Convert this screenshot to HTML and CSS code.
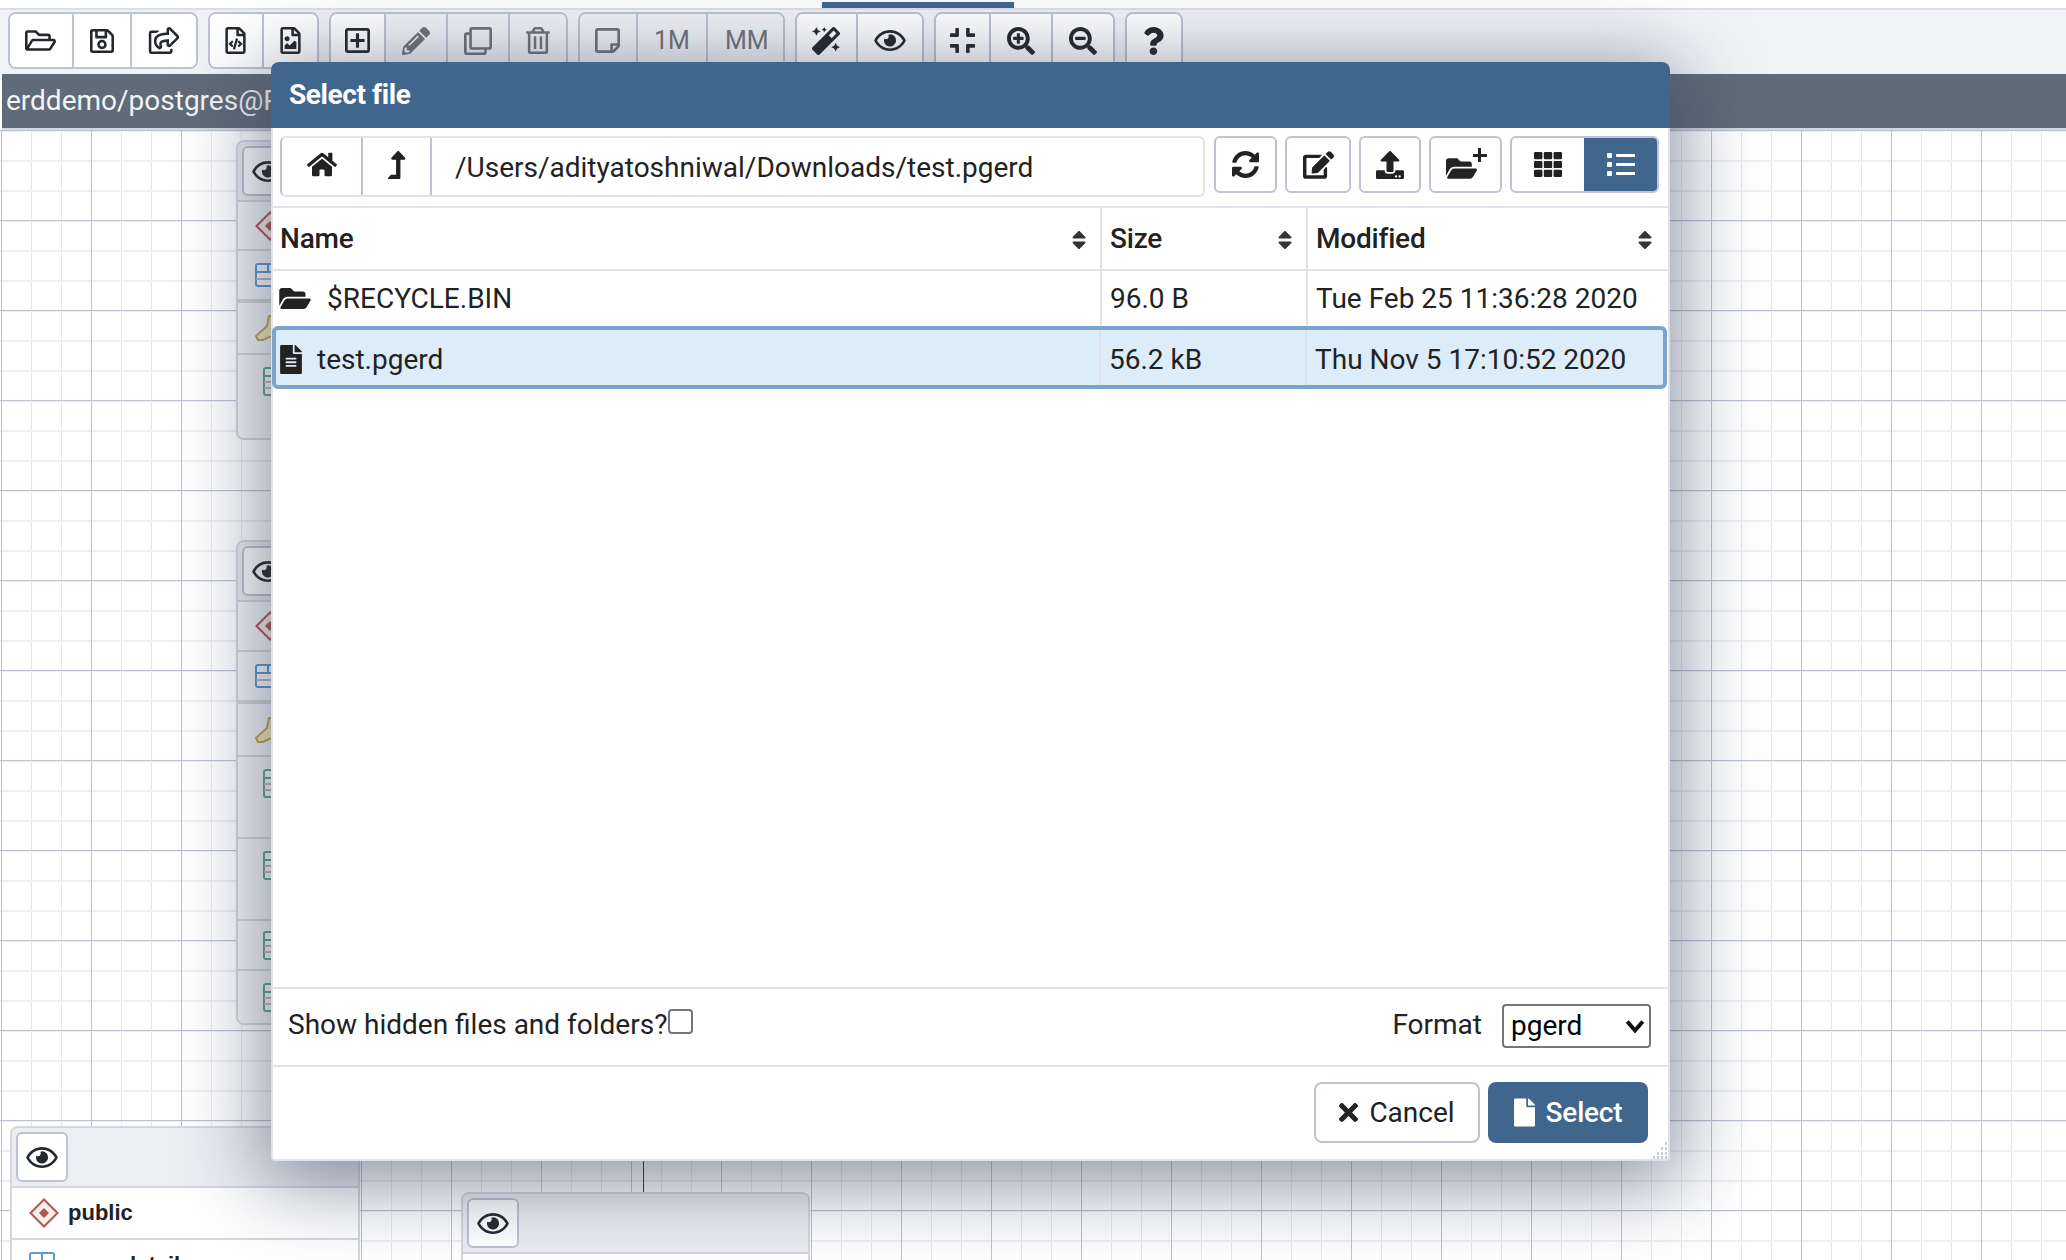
FILE: index.html
```html
<!DOCTYPE html>
<html lang="en">
<head>
<meta charset="utf-8">
<title>Select file</title>
<link rel="stylesheet" href="styles.css">
</head>
<body>
<svg class="defs" aria-hidden="true">
<defs>
<symbol id="i-eye" viewBox="0 64 576 384"><path d="M288 144a110.94 110.94 0 0 0-31.24 5 55.4 55.4 0 0 1 7.24 27 56 56 0 0 1-56 56 55.4 55.4 0 0 1-27-7.24A111.71 111.71 0 1 0 288 144zm284.52 97.4C518.29 135.59 410.93 64 288 64S57.68 135.64 3.48 241.41a32.35 32.35 0 0 0 0 29.19C57.71 376.41 165.07 448 288 448s230.32-71.64 284.52-177.41a32.35 32.35 0 0 0 0-29.19zM288 400c-98.65 0-189.09-55-237.93-144C98.91 167 189.34 112 288 112s189.09 55 237.93 144C477.1 345 386.66 400 288 400z"/></symbol>
<symbol id="i-open" viewBox="0 64 576 384"><path d="M527.9 224H480v-48c0-26.5-21.5-48-48-48H272l-64-64H48C21.5 64 0 85.5 0 112v288c0 26.5 21.5 48 48 48h400c16.5 0 31.9-8.5 40.7-22.6l79.9-128c20-31.9-3-73.4-40.7-73.4zM48 118c0-3.3 2.7-6 6-6h134.1l64 64H426c3.3 0 6 2.7 6 6v42H152c-16.8 0-32.4 8.8-41.1 23.2L48 351.4zm400 282H72l77.2-128H528z"/></symbol>
<symbol id="i-save" viewBox="0 32 448 448"><path d="M433.941 129.941l-83.882-83.882A48 48 0 0 0 316.118 32H48C21.49 32 0 53.49 0 80v352c0 26.51 21.49 48 48 48h352c26.51 0 48-21.49 48-48V163.882a48 48 0 0 0-14.059-33.941zM272 80v80H144V80h128zm122 352H54a6 6 0 0 1-6-6V86a6 6 0 0 1 6-6h42v104c0 13.255 10.745 24 24 24h176c13.255 0 24-10.745 24-24V83.882l78.243 78.243a6 6 0 0 1 1.757 4.243V426a6 6 0 0 1-6 6zM224 232c-48.523 0-88 39.477-88 88s39.477 88 88 88 88-39.477 88-88-39.477-88-88-88zm0 128c-22.056 0-40-17.944-40-40s17.944-40 40-40 40 17.944 40 40-17.944 40-40 40z"/></symbol>
<symbol id="i-share" viewBox="0 0 576 512"><path d="M561.938 158.06L417.94 14.092C387.926-15.922 336 5.097 336 48.032v57.198c-42.45 1.88-84.03 6.55-120.76 17.99-35.17 10.95-63.07 27.58-82.91 49.42C108.22 199.2 96 232.6 96 271.94c0 61.697 33.178 112.455 84.87 144.76 37.546 23.508 85.248-12.651 71.02-55.74-15.515-47.119-17.156-70.923 84.11-78.76V336c0 42.993 51.968 63.913 81.94 33.94l143.998-144c18.75-18.74 18.75-49.14 0-67.88zM384 336V232.16C255.309 234.082 166.492 255.35 206.31 376 176.79 357.55 144 324.08 144 271.94c0-109.334 129.14-118.947 240-119.85V48l144 144-144 144zm24.74 84.493a82.658 82.658 0 0 0 20.974-9.303c7.976-4.952 18.286.826 18.286 10.214V464c0 26.51-21.49 48-48 48H48c-26.51 0-48-21.49-48-48V112c0-26.51 21.49-48 48-48h132c6.627 0 12 5.373 12 12v4.486c0 4.917-2.987 9.369-7.569 11.152-13.702 5.331-26.396 11.537-38.05 18.585a12.138 12.138 0 0 1-6.28 1.777H54a6 6 0 0 0-6 6v340a6 6 0 0 0 6 6h340a6 6 0 0 0 6-6v-25.966c0-5.37 3.579-10.059 8.74-11.541z"/></symbol>
<symbol id="i-code" viewBox="0 0 384 512"><path d="M149.9 349.1l-.2-.2-32.8-28.9 32.8-28.9c3.6-3.2 4-8.8.8-12.4l-.2-.2-17.4-18.6c-3.4-3.6-9-3.7-12.4-.4l-57.7 54.1c-3.7 3.5-3.7 9.4 0 12.8l57.7 54.1c1.6 1.5 3.8 2.4 6 2.4 2.4 0 4.8-1 6.4-2.8l17.4-18.6c3.3-3.5 3.1-9.1-.4-12.4zm220-251.2L286 14C277 5 264.8-.1 252.1-.1H48C21.5 0 0 21.5 0 48v416c0 26.5 21.5 48 48 48h288c26.5 0 48-21.5 48-48V131.9c0-12.7-5.1-25-14.1-34zM256 51.9l76.1 76.1H256zM336 464H48V48h160v104c0 13.3 10.7 24 24 24h104zM209.6 214c-4.7-1.4-9.5 1.3-10.9 6L144 408.1c-1.4 4.7 1.3 9.6 6 10.9l24.4 7.1c4.7 1.4 9.6-1.4 10.9-6L240 231.9c1.4-4.7-1.3-9.6-6-10.9zm24.5 76.9l.2.2 32.8 28.9-32.8 28.9c-3.6 3.2-4 8.8-.8 12.4l.2.2 17.4 18.6c3.3 3.5 8.9 3.7 12.4.4l57.7-54.1c3.7-3.5 3.7-9.4 0-12.8l-57.7-54.1c-3.5-3.3-9.1-3.2-12.4.4l-17.4 18.6c-3.3 3.5-3.1 9.1.4 12.4z"/></symbol>
<symbol id="i-image" viewBox="0 0 384 512"><path d="M369.9 97.9L286 14C277 5 264.8-.1 252.1-.1H48C21.5 0 0 21.5 0 48v416c0 26.5 21.5 48 48 48h288c26.5 0 48-21.5 48-48V131.9c0-12.7-5.1-25-14.1-34zM332.1 128H256V51.9l76.1 76.1zM48 464V48h160v104c0 13.3 10.7 24 24 24h104v288H48zm32-48h224V288l-23.5-23.5c-4.7-4.7-12.3-4.7-17 0L176 352l-39.5-39.5c-4.7-4.7-12.3-4.7-17 0L80 352v64zm48-240c-26.5 0-48 21.5-48 48s21.5 48 48 48 48-21.5 48-48-21.5-48-48-48z"/></symbol>
<symbol id="i-plus" viewBox="0 32 448 448"><path d="M352 240v32c0 6.6-5.4 12-12 12h-88v88c0 6.6-5.4 12-12 12h-32c-6.6 0-12-5.4-12-12v-88h-88c-6.6 0-12-5.4-12-12v-32c0-6.6 5.4-12 12-12h88v-88c0-6.6 5.4-12 12-12h32c6.6 0 12 5.4 12 12v88h88c6.6 0 12 5.4 12 12zm96-160v352c0 26.5-21.5 48-48 48H48c-26.5 0-48-21.5-48-48V80c0-26.5 21.5-48 48-48h352c26.5 0 48 21.5 48 48zm-48 346V86c0-3.3-2.7-6-6-6H54c-3.3 0-6 2.7-6 6v340c0 3.3 2.7 6 6 6h340c3.3 0 6-2.7 6-6z"/></symbol>
<symbol id="i-pencil" viewBox="0 0 512 512"><path d="M497.9 142.1l-46.1 46.1c-4.7 4.7-12.3 4.7-17 0l-111-111c-4.7-4.7-4.7-12.3 0-17l46.1-46.1c18.7-18.7 49.1-18.7 67.9 0l60.1 60.1c18.8 18.7 18.8 49.1 0 67.9zM284.2 99.8L21.6 362.4.4 483.9c-2.9 16.4 11.4 30.6 27.8 27.8l121.5-21.3 262.6-262.6c4.7-4.7 4.7-12.3 0-17l-111-111c-4.8-4.7-12.4-4.7-17.1 0zM124.1 339.9c-5.5-5.5-5.5-14.3 0-19.8l154-154c5.5-5.5 14.3-5.5 19.8 0s5.5 14.3 0 19.8l-154 154c-5.5 5.5-14.3 5.5-19.8 0zM88 424h48v36.3l-64.5 11.3-31.1-31.1L51.7 376H88v48z"/></symbol>
<symbol id="i-clone" viewBox="0 0 512 512"><path d="M464 0H144c-26.51 0-48 21.49-48 48v48H48c-26.51 0-48 21.49-48 48v320c0 26.51 21.49 48 48 48h320c26.51 0 48-21.49 48-48v-48h48c26.51 0 48-21.49 48-48V48c0-26.51-21.49-48-48-48zM362 464H54a6 6 0 0 1-6-6V150a6 6 0 0 1 6-6h42v224c0 26.51 21.49 48 48 48h224v42a6 6 0 0 1-6 6zm96-96H150a6 6 0 0 1-6-6V54a6 6 0 0 1 6-6h308a6 6 0 0 1 6 6v308a6 6 0 0 1-6 6z"/></symbol>
<symbol id="i-trash" viewBox="0 0 448 512"><path d="M268 416h24a12 12 0 0 0 12-12V188a12 12 0 0 0-12-12h-24a12 12 0 0 0-12 12v216a12 12 0 0 0 12 12zM432 80h-82.41l-34-56.7A48 48 0 0 0 274.41 0H173.59a48 48 0 0 0-41.16 23.3L98.41 80H16A16 16 0 0 0 0 96v16a16 16 0 0 0 16 16h16v336a48 48 0 0 0 48 48h288a48 48 0 0 0 48-48V128h16a16 16 0 0 0 16-16V96a16 16 0 0 0-16-16zM171.84 50.91A6 6 0 0 1 177 48h94a6 6 0 0 1 5.15 2.91L293.61 80H154.39zM368 464H80V128h288zm-212-48h24a12 12 0 0 0 12-12V188a12 12 0 0 0-12-12h-24a12 12 0 0 0-12 12v216a12 12 0 0 0 12 12z"/></symbol>
<symbol id="i-note" viewBox="0 32 448 448"><path d="M448 348.106V80c0-26.51-21.49-48-48-48H48C21.49 32 0 53.49 0 80v351.988c0 26.51 21.49 48 48 48h268.118a48 48 0 0 0 33.941-14.059l83.882-83.882A48 48 0 0 0 448 348.106zm-128 80v-76.118h76.118L320 428.106zM400 80v223.988H296c-13.255 0-24 10.745-24 24v104H48V80h352z"/></symbol>
<symbol id="i-magic" viewBox="0 0 512 512"><path d="M224 96l16-32 32-16-32-16-16-32-16 32-32 16 32 16 16 32zM80 160l26.66-53.33L160 80l-53.34-26.67L80 0 53.34 53.33 0 80l53.34 26.67L80 160zm352 128l-26.66 53.33L352 368l53.34 26.67L432 448l26.66-53.33L512 368l-53.34-26.67L432 288zm70.62-193.77L417.77 9.38C411.53 3.12 403.34 0 395.15 0c-8.19 0-16.38 3.12-22.63 9.38L9.38 372.52c-12.5 12.5-12.5 32.76 0 45.25l84.85 84.85c6.25 6.25 14.44 9.37 22.62 9.37 8.19 0 16.38-3.12 22.63-9.37l363.14-363.15c12.5-12.48 12.5-32.75 0-45.24zM359.45 203.46l-50.91-50.91 86.6-86.6 50.91 50.91-86.6 86.6z"/></symbol>
<symbol id="i-compress" viewBox="0 32 448 448"><path d="M436 192H312c-13.3 0-24-10.7-24-24V44c0-6.6 5.4-12 12-12h40c6.6 0 12 5.4 12 12v84h84c6.6 0 12 5.4 12 12v40c0 6.6-5.4 12-12 12zm-276-24V44c0-6.6-5.4-12-12-12h-40c-6.6 0-12 5.4-12 12v84H12c-6.6 0-12 5.4-12 12v40c0 6.6 5.4 12 12 12h124c13.3 0 24-10.7 24-24zm0 300V344c0-13.3-10.7-24-24-24H12c-6.6 0-12 5.4-12 12v40c0 6.6 5.4 12 12 12h84v84c0 6.6 5.4 12 12 12h40c6.6 0 12-5.4 12-12zm192 0v-84h84c6.6 0 12-5.4 12-12v-40c0-6.6-5.4-12-12-12H312c-13.3 0-24 10.7-24 24v124c0 6.6 5.4 12 12 12h40c6.6 0 12-5.4 12-12z"/></symbol>
<symbol id="i-zoomin" viewBox="0 0 512 512"><path d="M304 192v32c0 6.6-5.4 12-12 12h-56v56c0 6.6-5.4 12-12 12h-32c-6.6 0-12-5.4-12-12v-56h-56c-6.6 0-12-5.4-12-12v-32c0-6.6 5.4-12 12-12h56v-56c0-6.6 5.4-12 12-12h32c6.6 0 12 5.4 12 12v56h56c6.6 0 12 5.4 12 12zm201 284.7L476.7 505c-9.4 9.4-24.6 9.4-33.9 0L343 405.3c-4.5-4.5-7-10.6-7-17V372c-35.3 27.6-79.7 44-128 44C93.1 416 0 322.9 0 208S93.1 0 208 0s208 93.1 208 208c0 48.3-16.4 92.7-44 128h16.3c6.4 0 12.5 2.5 17 7l99.7 99.7c9.3 9.4 9.3 24.6 0 34zM344 208c0-75.2-60.8-136-136-136S72 132.8 72 208s60.8 136 136 136 136-60.8 136-136z"/></symbol>
<symbol id="i-zoomout" viewBox="0 0 512 512"><path d="M304 192v32c0 6.6-5.4 12-12 12H124c-6.6 0-12-5.4-12-12v-32c0-6.6 5.4-12 12-12h168c6.6 0 12 5.4 12 12zm201 284.7L476.7 505c-9.4 9.4-24.6 9.4-33.9 0L343 405.3c-4.5-4.5-7-10.6-7-17V372c-35.3 27.6-79.7 44-128 44C93.1 416 0 322.9 0 208S93.1 0 208 0s208 93.1 208 208c0 48.3-16.4 92.7-44 128h16.3c6.4 0 12.5 2.5 17 7l99.7 99.7c9.3 9.4 9.3 24.6 0 34zM344 208c0-75.2-60.8-136-136-136S72 132.8 72 208s60.8 136 136 136 136-60.8 136-136z"/></symbol>
<symbol id="i-help" viewBox="20 0 364 512"><path d="M202.021 0C122.202 0 70.503 32.703 29.914 91.026c-7.363 10.58-5.093 25.086 5.178 32.874l43.138 32.709c10.373 7.865 25.132 6.026 33.253-4.148 25.049-31.381 43.63-49.449 82.757-49.449 30.764 0 68.816 19.799 68.816 49.631 0 22.552-18.617 34.134-48.993 51.164-35.423 19.86-82.299 44.576-82.299 106.405V320c0 13.255 10.745 24 24 24h72.471c13.255 0 24-10.745 24-24v-5.773c0-42.86 125.268-44.645 125.268-160.627C377.504 66.256 286.902 0 202.021 0zM192 373.459c-38.196 0-69.271 31.075-69.271 69.271 0 38.195 31.075 69.27 69.271 69.27s69.271-31.075 69.271-69.271-31.075-69.27-69.271-69.27z"/></symbol>
<symbol id="i-sync" viewBox="8 8 496 496"><path d="M370.72 133.28C339.458 104.008 298.888 87.962 255.848 88c-77.458.068-144.328 53.178-162.791 126.85-1.344 5.363-6.122 9.15-11.651 9.15H24.103c-7.498 0-13.194-6.807-11.807-14.176C33.933 94.924 134.813 8 256 8c66.448 0 126.791 26.136 171.315 68.685L463.03 40.97C478.149 25.851 504 36.559 504 57.941V192c0 13.255-10.745 24-24 24H345.941c-21.382 0-32.09-25.851-16.971-40.971l41.75-41.749zM32 296h134.059c21.382 0 32.09 25.851 16.971 40.971l-41.75 41.75c31.262 29.273 71.835 45.319 114.876 45.28 77.418-.07 144.315-53.144 162.787-126.849 1.344-5.363 6.122-9.15 11.651-9.15h57.304c7.498 0 13.194 6.807 11.807 14.176C478.067 417.076 377.187 504 256 504c-66.448 0-126.791-26.136-171.315-68.685L48.97 471.03C33.851 486.149 8 475.441 8 454.059V320c0-13.255 10.745-24 24-24z"/></symbol>
<symbol id="i-edit" viewBox="0 0 576 512"><path d="M402.6 83.2l90.2 90.2c3.8 3.8 3.8 10 0 13.8L274.4 405.6l-92.8 10.3c-12.4 1.4-22.9-9.1-21.5-21.5l10.3-92.8L388.8 83.2c3.8-3.8 10-3.8 13.8 0zm162-22.9l-48.8-48.8c-15.2-15.2-39.9-15.2-55.2 0l-35.4 35.4c-3.8 3.8-3.8 10 0 13.8l90.2 90.2c3.8 3.8 10 3.8 13.8 0l35.4-35.4c15.2-15.3 15.2-40 0-55.2zM384 346.2V448H64V128h229.8c3.2 0 6.2-1.3 8.5-3.5l40-40c7.6-7.6 2.2-20.5-8.5-20.5H48C21.5 64 0 85.5 0 112v352c0 26.5 21.5 48 48 48h352c26.5 0 48-21.5 48-48V306.2c0-10.7-12.9-16-20.5-8.5l-40 40c-2.2 2.3-3.5 5.3-3.5 8.5z"/></symbol>
<symbol id="i-upload" viewBox="0 0 512 512"><path d="M296 384h-80c-13.3 0-24-10.7-24-24V192h-87.7c-17.8 0-26.7-21.5-14.1-34.1L242.3 5.7c7.5-7.5 19.8-7.5 27.3 0l152.2 152.2c12.6 12.6 3.7 34.1-14.1 34.1H320v168c0 13.3-10.7 24-24 24zm216-8v112c0 13.3-10.7 24-24 24H24c-13.3 0-24-10.7-24-24V376c0-13.3 10.7-24 24-24h136v8c0 30.9 25.1 56 56 56h80c30.9 0 56-25.1 56-56v-8h136c13.3 0 24 10.7 24 24zm-124 88c0-11-9-20-20-20s-20 9-20 20 9 20 20 20 20-9 20-20zm64 0c0-11-9-20-20-20s-20 9-20 20 9 20 20 20 20-9 20-20z"/></symbol>
<symbol id="i-folder" viewBox="0 64 576 384"><path d="M572.694 292.093L500.27 416.248A63.997 63.997 0 0 1 444.989 448H45.025c-18.523 0-30.064-20.093-20.731-36.093l72.424-124.155A64 64 0 0 1 152 256h399.964c18.523 0 30.064 20.093 20.73 36.093zM152 224h328v-48c0-26.51-21.49-48-48-48H272l-64-64H48C21.49 64 0 85.49 0 112v278.046l69.077-118.418C86.214 242.25 117.989 224 152 224z"/></symbol>
<symbol id="i-home" viewBox="0 32 576 448"><path d="M280.37 148.26L96 300.11V464a16 16 0 0 0 16 16l112.06-.29a16 16 0 0 0 15.92-16V368a16 16 0 0 1 16-16h64a16 16 0 0 1 16 16v95.64a16 16 0 0 0 16 16.05L464 480a16 16 0 0 0 16-16V300L295.67 148.26a12.19 12.19 0 0 0-15.3 0zM571.6 251.47L488 182.56V44.05a12 12 0 0 0-12-12h-56a12 12 0 0 0-12 12v72.61L318.47 43a48 48 0 0 0-61 0L4.34 251.47a12 12 0 0 0-1.6 16.9l25.5 31A12 12 0 0 0 45.15 301l235.22-193.74a12.19 12.19 0 0 1 15.3 0L530.9 301a12 12 0 0 0 16.9-1.6l25.5-31a12 12 0 0 0-1.7-16.93z"/></symbol>
<symbol id="i-up" viewBox="0 0 320 512"><path d="M313.553 119.669L209.587 7.666c-9.485-10.214-25.676-10.229-35.174 0L70.438 119.669C56.232 134.969 67.062 160 88.025 160H152v272H68.024a11.996 11.996 0 0 0-8.485 3.515l-56 56C-4.021 499.074 1.333 512 12.024 512H208c13.255 0 24-10.745 24-24V160h63.966c20.878 0 31.851-24.969 17.587-40.331z"/></symbol>
<symbol id="i-filealt" viewBox="0 0 384 512"><path d="M224 136V0H24C10.7 0 0 10.7 0 24v464c0 13.3 10.7 24 24 24h336c13.3 0 24-10.7 24-24V160H248c-13.2 0-24-10.8-24-24zm64 236c0 6.6-5.4 12-12 12H108c-6.6 0-12-5.4-12-12v-8c0-6.6 5.4-12 12-12h168c6.6 0 12 5.4 12 12v8zm0-64c0 6.6-5.4 12-12 12H108c-6.6 0-12-5.4-12-12v-8c0-6.6 5.4-12 12-12h168c6.6 0 12 5.4 12 12v8zm0-72v8c0 6.6-5.4 12-12 12H108c-6.6 0-12-5.4-12-12v-8c0-6.6 5.4-12 12-12h168c6.6 0 12 5.4 12 12zm96-114.1v6.1H256V0h6.1c6.4 0 12.5 2.5 17 7l97.9 98c4.5 4.5 7 10.6 7 16.9z"/></symbol>
<symbol id="i-file" viewBox="0 0 384 512"><path d="M224 136V0H24C10.7 0 0 10.7 0 24v464c0 13.3 10.7 24 24 24h336c13.3 0 24-10.7 24-24V160H248c-13.2 0-24-10.8-24-24zm160-14.1v6.1H256V0h6.1c6.4 0 12.5 2.5 17 7l97.9 98c4.5 4.5 7 10.6 7 16.9z"/></symbol>
<symbol id="i-times" viewBox="0 80 352 352"><path d="M242.72 256l100.07-100.07c12.28-12.28 12.28-32.19 0-44.48l-22.24-22.24c-12.28-12.28-32.19-12.28-44.48 0L176 189.28 75.93 89.21c-12.28-12.28-32.19-12.28-44.48 0L9.21 111.45c-12.28 12.28-12.28 32.19 0 44.48L109.28 256 9.21 356.07c-12.28 12.28-12.28 32.19 0 44.48l22.24 22.24c12.28 12.28 32.2 12.28 44.48 0L176 322.72l100.07 100.07c12.28 12.28 32.2 12.28 44.48 0l22.24-22.24c12.28-12.28 12.28-32.19 0-44.48L242.72 256z"/></symbol>
<symbol id="i-sort" viewBox="20 56 280 400"><path d="M41 288h238c21.4 0 32.1 25.9 17 41L177 448c-9.4 9.4-24.6 9.4-33.9 0L24 329c-15.1-15.1-4.4-41 17-41zm255-105L177 64c-9.4-9.4-24.6-9.4-33.9 0L24 183c-15.1 15.1-4.4 41 17 41h238c21.4 0 32.1-25.9 17-41z"/></symbol>
<symbol id="i-th" viewBox="0 0 28 25"><rect width="8.4" height="7.2" rx="1.2"/><rect x="9.8" width="8.4" height="7.2" rx="1.2"/><rect x="19.6" width="8.4" height="7.2" rx="1.2"/><rect y="8.9" width="8.4" height="7.2" rx="1.2"/><rect x="9.8" y="8.9" width="8.4" height="7.2" rx="1.2"/><rect x="19.6" y="8.9" width="8.4" height="7.2" rx="1.2"/><rect y="17.8" width="8.4" height="7.2" rx="1.2"/><rect x="9.8" y="17.8" width="8.4" height="7.2" rx="1.2"/><rect x="19.6" y="17.8" width="8.4" height="7.2" rx="1.2"/></symbol>
<symbol id="i-list" viewBox="0 0 28 23"><rect width="5" height="5" rx="1"/><rect x="9" y="1" width="19" height="3" rx=".8"/><rect y="9" width="5" height="5" rx="1"/><rect x="9" y="10" width="19" height="3" rx=".8"/><rect y="18" width="5" height="5" rx="1"/><rect x="9" y="19" width="19" height="3" rx=".8"/></symbol>
<symbol id="i-diamond" viewBox="0 0 30 30"><path d="M15 1.5 28.5 15 15 28.5 1.5 15Z" fill="#fbeeec" stroke="#b5544f" stroke-width="2"/><path d="M15 10 20 15 15 20 10 15Z" fill="#b5544f"/></symbol>
<symbol id="i-tblue" viewBox="0 0 26 24"><rect x="1" y="1" width="24" height="22" rx="2" fill="#fff" stroke="#5b9bd5" stroke-width="2"/><path d="M13 1v8M1 9h24" stroke="#5b9bd5" stroke-width="2" fill="none"/><path d="M1 16h24" stroke="#bbb" stroke-width="2" fill="none"/></symbol>
<symbol id="i-tgreen" viewBox="0 0 26 29"><rect x="1" y="1" width="24" height="27" rx="2" fill="#fff" stroke="#5da595" stroke-width="2"/><path d="M1 9h24" stroke="#5da595" stroke-width="2" fill="none"/><path d="M1 15h24M1 21h24" stroke="#bbb" stroke-width="2" fill="none"/></symbol>
<symbol id="i-key" viewBox="0 0 30 26"><path d="M1 21 12 11 14 1 30 1 30 20 14 22 8 25 3 25Z" fill="#f6eeb0" stroke="#bda85a" stroke-width="2"/></symbol>
</defs>
</svg>

<div class="app">
  <div class="tabstrip"><span class="tabmark"></span></div>
  <div class="toolbar">
    <div class="group">
      <span class="btn"><svg class="ic w31 h21"><use href="#i-open"/></svg></span>
      <span class="btn"><svg class="ic w24 h24"><use href="#i-save"/></svg></span>
      <span class="btn"><svg class="ic w32 h27"><use href="#i-share"/></svg></span>
    </div>
    <div class="group">
      <span class="btn"><svg class="ic w21 h27"><use href="#i-code"/></svg></span>
      <span class="btn"><svg class="ic w21 h27"><use href="#i-image"/></svg></span>
    </div>
    <div class="group">
      <span class="btn tight"><svg class="ic w25 h25"><use href="#i-plus"/></svg></span>
      <span class="btn off"><svg class="ic w28 h28"><use href="#i-pencil"/></svg></span>
      <span class="btn off"><svg class="ic w28 h28"><use href="#i-clone"/></svg></span>
      <span class="btn off"><svg class="ic w24 h27"><use href="#i-trash"/></svg></span>
    </div>
    <div class="group">
      <span class="btn off"><svg class="ic w25 h25"><use href="#i-note"/></svg></span>
      <span class="btn off txt">1M</span>
      <span class="btn off txt">MM</span>
    </div>
    <div class="group">
      <span class="btn"><svg class="ic w28 h28"><use href="#i-magic"/></svg></span>
      <span class="btn"><svg class="ic w32 h21"><use href="#i-eye"/></svg></span>
    </div>
    <div class="group">
      <span class="btn tight"><svg class="ic w25 h25"><use href="#i-compress"/></svg></span>
      <span class="btn"><svg class="ic w28 h28"><use href="#i-zoomin"/></svg></span>
      <span class="btn"><svg class="ic w28 h28"><use href="#i-zoomout"/></svg></span>
    </div>
    <div class="group">
      <span class="btn wide"><svg class="ic w20 h28"><use href="#i-help"/></svg></span>
    </div>
  </div>
  <div class="titlebar">erddemo/postgres@PostgreSQL 12</div>
  <div class="canvas">
    <div class="node n1">
      <div class="node-head"><span class="eyebtn"><svg class="ic w32 h21"><use href="#i-eye"/></svg></span></div>
      <div class="nrow r49"><svg class="ic w30 h30"><use href="#i-diamond"/></svg></div>
      <div class="nrow r52 heavy"><svg class="ic w26 h24"><use href="#i-tblue"/></svg></div>
      <div class="nrow r52"><svg class="ic w30 h26"><use href="#i-key"/></svg></div>
      <div class="nrow r83 tall last indent"><svg class="ic w26 h29"><use href="#i-tgreen"/></svg></div>
    </div>
    <div class="node n2">
      <div class="node-head"><span class="eyebtn"><svg class="ic w32 h21"><use href="#i-eye"/></svg></span></div>
      <div class="nrow r50"><svg class="ic w30 h30"><use href="#i-diamond"/></svg></div>
      <div class="nrow r52 heavy"><svg class="ic w26 h24"><use href="#i-tblue"/></svg></div>
      <div class="nrow r53"><svg class="ic w30 h26"><use href="#i-key"/></svg></div>
      <div class="nrow r82 tall indent"><svg class="ic w26 h29"><use href="#i-tgreen"/></svg></div>
      <div class="nrow r82 tall indent"><svg class="ic w26 h29"><use href="#i-tgreen"/></svg></div>
      <div class="nrow r50 indent"><svg class="ic w26 h29"><use href="#i-tgreen"/></svg></div>
      <div class="nrow r52 last indent"><svg class="ic w26 h29"><use href="#i-tgreen"/></svg></div>
    </div>
    <div class="node n3">
      <div class="node-head"><span class="eyebtn"><svg class="ic w32 h21"><use href="#i-eye"/></svg></span></div>
      <div class="nrow r52 white"><svg class="ic w30 h30"><use href="#i-diamond"/></svg><span class="nname">public</span></div>
      <div class="nrow r52 white tall"><svg class="ic w26 h24"><use href="#i-tblue"/></svg><span class="nname">user_details</span></div>
    </div>
    <div class="link"></div>
    <div class="node n4">
      <div class="node-head"><span class="eyebtn"><svg class="ic w32 h21"><use href="#i-eye"/></svg></span></div>
      <div class="nrow r52 white"></div>
    </div>
  </div>
</div>

<div class="dialog">
  <div class="dlg-head">Select file</div>
  <div class="pathrow">
    <div class="pathbar">
      <span class="pbtn home"><svg class="ic w30 h25"><use href="#i-home"/></svg></span>
      <span class="pbtn up"><svg class="ic w19 h28"><use href="#i-up"/></svg></span>
      <span class="pathtext">/Users/adityatoshniwal/Downloads/test.pgerd</span>
    </div>
    <div class="tools">
      <span class="tool t1"><svg class="ic w27 h27"><use href="#i-sync"/></svg></span>
      <span class="tool t2"><svg class="ic w31 h28"><use href="#i-edit"/></svg></span>
      <span class="tool t3"><svg class="ic w28 h28"><use href="#i-upload"/></svg></span>
      <span class="tool t4"><span class="fplus"><svg class="ic w31 h21"><use href="#i-folder"/></svg><span class="plus"></span></span></span>
      <span class="viewswitch">
        <span class="vbtn"><svg class="ic w28 h25"><use href="#i-th"/></svg></span>
        <span class="vbtn active"><svg class="ic w28 h23"><use href="#i-list"/></svg></span>
      </span>
    </div>
  </div>
  <div class="filetable">
    <div class="frow fhead">
      <div class="cell">Name<svg class="ic sort"><use href="#i-sort"/></svg></div>
      <div class="cell">Size<svg class="ic sort"><use href="#i-sort"/></svg></div>
      <div class="cell">Modified<svg class="ic sort"><use href="#i-sort"/></svg></div>
    </div>
    <div class="frow">
      <div class="cell name"><svg class="ic w32 h21"><use href="#i-folder"/></svg><span class="fname">$RECYCLE.BIN</span></div>
      <div class="cell">96.0 B</div>
      <div class="cell">Tue Feb 25 11:36:28 2020</div>
    </div>
    <div class="frow selected">
      <div class="cell name"><svg class="ic w22 h29"><use href="#i-filealt"/></svg><span class="fname near">test.pgerd</span></div>
      <div class="cell">56.2 kB</div>
      <div class="cell">Thu Nov 5 17:10:52 2020</div>
    </div>
  </div>
  <div class="optrow">
    <label class="hidden-opt">Show hidden files and folders?<input type="checkbox" class="check"></label>
    <div class="format">
      <span class="fmt-label">Format</span>
      <span class="selectwrap">
        <select class="fmt"><option>pgerd</option></select>
        <svg class="chev" viewBox="0 0 18 14"><path d="M2 3l7 8 7-8" fill="none" stroke="#111" stroke-width="3.6"/></svg>
      </span>
    </div>
  </div>
  <div class="actions">
    <button class="act cancel"><svg class="ic w19 h19"><use href="#i-times"/></svg>Cancel</button>
    <button class="act primary"><svg class="ic w21 h29"><use href="#i-file"/></svg>Select</button>
  </div>
  <svg class="grip" viewBox="0 0 16 18"><g fill="#c9ccd4"><rect x="13" y="1" width="2" height="3"/><rect x="9" y="6" width="2" height="3"/><rect x="13" y="6" width="2" height="3"/><rect x="5" y="11" width="2" height="3"/><rect x="9" y="11" width="2" height="3"/><rect x="13" y="11" width="2" height="3"/><rect x="1" y="15" width="2" height="3"/><rect x="5" y="15" width="2" height="3"/><rect x="9" y="15" width="2" height="3"/><rect x="13" y="15" width="2" height="3"/></g></svg>
</div>
</body>
</html>
```
FILE: styles.css
```css
* { box-sizing: border-box; }
html, body { margin: 0; padding: 0; width: 2066px; height: 1260px; overflow: hidden; background: #fff; font-family: Roboto, "Liberation Sans", sans-serif; color: #222; }
.defs { width: 0; height: 0; position: absolute; }
.ic { display: block; flex: none; fill: currentColor; }
.w19 { width: 19px; } .w20 { width: 20px; } .w21 { width: 21px; } .w22 { width: 22px; } .w24 { width: 24px; } .w25 { width: 25px; } .w26 { width: 26px; } .w27 { width: 27px; } .w28 { width: 28px; } .w30 { width: 30px; } .w31 { width: 31px; } .w32 { width: 32px; }
.h19 { height: 19px; } .h21 { height: 21px; } .h23 { height: 23px; } .h24 { height: 24px; } .h25 { height: 25px; } .h26 { height: 26px; } .h27 { height: 27px; } .h28 { height: 28px; } .h29 { height: 29px; } .h30 { height: 30px; }

.app { width: 2066px; height: 1260px; display: flex; flex-direction: column; }
.tabstrip { height: 8px; padding: 2px 0 0 822px; background: #fff; flex: none; }
.tabmark { display: block; width: 192px; height: 6px; background: #40668e; }
.toolbar { height: 66px; flex: none; display: flex; gap: 10px; padding: 2px 0 0 8px; border-top: 2px solid #dcdee4; background: #f2f3f6; }
.group { height: 57px; display: flex; border: 2px solid #bcc3d2; border-radius: 8px; background: #fff; overflow: hidden; }
.btn { display: flex; align-items: center; padding: 0 16px; border-right: 2px solid #bcc3d2; color: #24282c; background: #fff; }
.btn:first-child { padding-left: 15px; }
.btn.tight { padding: 0 14px; }
.btn.wide { padding: 0 17px; }
.btn:last-child { border-right: 0; }
.btn.off { color: #6f7278; background: #f1f2f5; }
.btn.txt { font-size: 25px; padding: 0 16px; }
.btn.txt:last-child { padding: 0 14px 0 17px; }
.titlebar { height: 56px; flex: none; margin-left: 2px; padding: 0 0 2px 4px; display: flex; align-items: center; background: #5f6b78; border-bottom: 2px solid #d4d7de; color: #f2f4f6; font-size: 28px; white-space: nowrap; overflow: hidden; }
.canvas { position: relative; flex: 1; overflow: hidden; background-color: #fff;
  background-image:
    linear-gradient(#bcc3d2 1px, transparent 1px),
    linear-gradient(90deg, #bcc3d2 1px, transparent 1px),
    linear-gradient(#edeff3 2px, transparent 2px),
    linear-gradient(90deg, #e6e8ed 1px, transparent 1px);
  background-size: 100% 90px, 90px 100%, 100% 30px, 30px 100%;
  background-position: 0 0, 1px 0, 0 0, 1px 0; }

.node { position: absolute; width: 349px; background: #fff; border: 2px solid #d4d7de; border-radius: 8px; overflow: hidden; }
.n1 { left: 236px; top: 10px; }
.n2 { left: 236px; top: 410px; }
.n3 { left: 10px; top: 996px; width: 350px; }
.n4 { left: 461px; top: 1062px; }
.node-head { height: 60px; padding: 4px 0 0 4px; background: #eceef2; border-bottom: 2px solid #d4d7de; }
.eyebtn { width: 52px; height: 50px; display: flex; align-items: center; justify-content: center; background: #fff; border: 2px solid #bcc3d2; border-radius: 6px; color: #24282c; }
.nrow { display: flex; align-items: center; padding-left: 17px; border-bottom: 2px solid #d4d7de; background: #f7f8fa; }
.nrow.white { background: #fff; }
.nrow.tall { align-items: flex-start; padding-top: 12px; }
.nrow.indent { padding-left: 25px; }
.nrow.heavy { border-bottom-width: 4px; }
.nrow.last { border-bottom: 0; }
.r49 { height: 49px; } .r50 { height: 50px; } .r52 { height: 52px; } .r53 { height: 53px; } .r82 { height: 82px; } .r83 { height: 83px; }
.nname { margin-left: 9px; font: bold 22px "Liberation Sans", Arial, sans-serif; color: #222; }
.link { position: absolute; left: 643px; top: 1031px; width: 1px; height: 31px; background: #333; }

.dialog { position: absolute; left: 271px; top: 62px; width: 1399px; height: 1099px; display: flex; flex-direction: column; background: #fff; border: solid #e0e2e8; border-width: 0 2px 2px; border-radius: 8px 8px 4px 4px; box-shadow: 0 14px 80px 10px rgba(50, 60, 90, .55); }
.dlg-head { height: 66px; flex: none; margin: 0 -2px; padding: 0 0 2px 18px; display: flex; align-items: center; background: #40668e; color: #fff; border-radius: 8px 8px 0 0; font-size: 28px; font-weight: 700; letter-spacing: -.4px; }
.pathrow { height: 78px; flex: none; display: flex; gap: 9px; padding: 8px 8px 0 7px; }
.pathbar { width: 925px; height: 61px; display: flex; border: 2px solid #e0e2e8; border-left-color: #bcc3d2; border-radius: 6px; }
.pbtn { display: flex; align-items: center; justify-content: center; height: 100%; border-right: 2px solid #bcc3d2; color: #222; padding-bottom: 4px; }
.home { width: 81px; } .up { width: 69px; }
.pathtext { padding: 1px 0 0 23px; display: flex; align-items: center; font-size: 28px; white-space: nowrap; }
.tools { display: flex; gap: 8px; }
.tool { height: 57px; display: flex; align-items: center; justify-content: center; border: 2px solid #bcc3d2; border-radius: 6px; color: #222; }
.t1 { width: 63px; } .t2 { width: 66px; } .t3 { width: 62px; } .t4 { width: 73px; }
.fplus { position: relative; display: block; padding-top: 8px; margin-right: 9px; }
.plus { position: absolute; left: 27px; top: -2px; width: 14px; height: 14px; background: linear-gradient(#222,#222) center/100% 3px no-repeat, linear-gradient(#222,#222) center/3px 100% no-repeat; }
.viewswitch { width: 149px; height: 57px; display: flex; border: 2px solid #bcc3d2; border-radius: 6px; overflow: hidden; }
.vbtn { flex: 1; display: flex; align-items: center; justify-content: center; color: #222; }
.vbtn.active { flex: none; width: 73px; background: #40668e; color: #fff; }

.filetable { flex: 1; border-top: 2px solid #e0e2e8; }
.frow { display: grid; grid-template-columns: 829px 206px 1fr; height: 55px; font-size: 28px; }
.cell { display: flex; align-items: center; padding: 0 8px; border-right: 2px solid #e0e2e8; position: relative; white-space: nowrap; margin: 0 0 1px; }
.cell:last-child { border-right: 0; }
.cell.name { padding-left: 6px; }
.fname { margin-left: 16px; }
.fname.near { margin-left: 15px; }
.fhead { height: 63px; border-bottom: 2px solid #e0e2e8; font-weight: 500; letter-spacing: -.2px; }
.fhead .cell { margin: 0; padding: 0 8px; }
.fhead .cell:first-child { padding-left: 7px; }
.sort { position: absolute; right: 14px; top: 23px; width: 14px; height: 18px; color: #333; }
.fhead .cell:nth-child(3) .sort { right: 16px; }
.selected { height: 63px; margin: 0 1px 0 -1px; background: #dcecf9; border: 4px solid #7ba4c9; border-radius: 6px; grid-template-columns: 825px 206px 1fr; }
.selected .cell { margin: 0; padding-top: 3px; }
.selected .cell.name { padding-left: 4px; }

.optrow { height: 78px; flex: none; display: flex; align-items: center; justify-content: space-between; border-top: 2px solid #e0e2e8; padding: 0 17px 5px 15px; font-size: 28px; }
.hidden-opt { display: flex; align-items: center; }
.check { appearance: none; width: 25px; height: 25px; margin: -6px 0 0 1px; border: 2px solid #767676; border-radius: 4px; background: #fff; }
.format { display: flex; align-items: center; gap: 20px; }
.selectwrap { position: relative; display: block; margin-top: 2px; }
.fmt { appearance: none; display: block; width: 149px; height: 44px; padding: 0 0 0 7px; border: 2px solid #767676; border-radius: 4px; background: #fff; color: #000; font: 28px Roboto, sans-serif; }
.chev { position: absolute; right: 6px; top: 14px; width: 20px; height: 16px; pointer-events: none; }
.actions { height: 94px; flex: none; display: flex; justify-content: flex-end; gap: 8px; padding: 15px 20px 0 0; border-top: 2px solid #e0e2e8; }
.act { height: 61px; display: flex; align-items: center; justify-content: center; gap: 11px; padding: 0; border-radius: 8px; font: 28px Roboto, sans-serif; }
.cancel { width: 166px; background: #fff; border: 2px solid #bcc3d2; color: #222; font-weight: 400; }
.primary { width: 160px; background: #40668e; border: 0; color: #fff; font-weight: 500; letter-spacing: -.2px; }
.grip { position: absolute; right: 0; bottom: 0; width: 16px; height: 18px; }
```
